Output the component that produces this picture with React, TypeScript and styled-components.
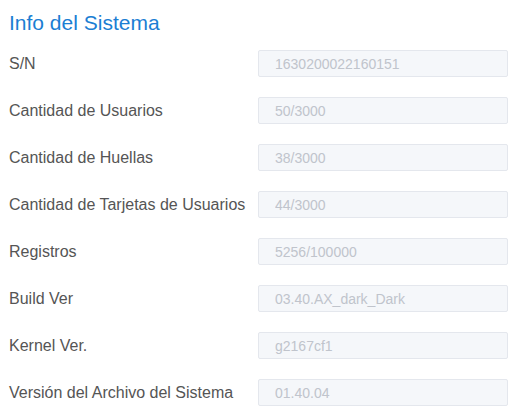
import React from 'react';
import styled, { createGlobalStyle } from 'styled-components';

const GlobalStyle = createGlobalStyle`
  body {
    margin: 0;
    background: #fff;
    font-family: "Liberation Sans", Arial, sans-serif;
  }
`;

const Panel = styled.div`
  width: 523px;
  padding: 9px 0 0 9px;
  box-sizing: border-box;
`;

const Title = styled.h2`
  margin: 0 0 14px;
  font-size: 21px;
  font-weight: normal;
  color: #1b7ed3;
  line-height: 27px;
`;

const Row = styled.div`
  display: grid;
  grid-template-columns: 249px 250px;
  align-items: center;
  height: 27px;
  margin-bottom: 20px;
`;

const Label = styled.span`
  font-size: 16px;
  color: #555;
`;

const Field = styled.input`
  box-sizing: border-box;
  width: 250px;
  height: 27px;
  padding: 0 16px;
  border: 1px solid #e4e7ed;
  border-radius: 2px;
  background: #f5f7fa;
  color: #c0c4cc;
  font-family: "Liberation Sans", Arial, sans-serif;
  font-size: 14px;
  outline: none;
`;

const rows: [string, string][] = [
  ['S/N', '1630200022160151'],
  ['Cantidad de Usuarios', '50/3000'],
  ['Cantidad de Huellas', '38/3000'],
  ['Cantidad de Tarjetas de Usuarios', '44/3000'],
  ['Registros', '5256/100000'],
  ['Build Ver', '03.40.AX_dark_Dark'],
  ['Kernel Ver.', 'g2167cf1'],
  ['Versión del Archivo del Sistema', '01.40.04'],
];

export default function App() {
  return (
    <>
      <GlobalStyle />
      <Panel>
        <Title>Info del Sistema</Title>
        {rows.map(([label, value]) => (
          <Row key={label}>
            <Label>{label}</Label>
            <Field value={value} disabled readOnly />
          </Row>
        ))}
      </Panel>
    </>
  );
}
